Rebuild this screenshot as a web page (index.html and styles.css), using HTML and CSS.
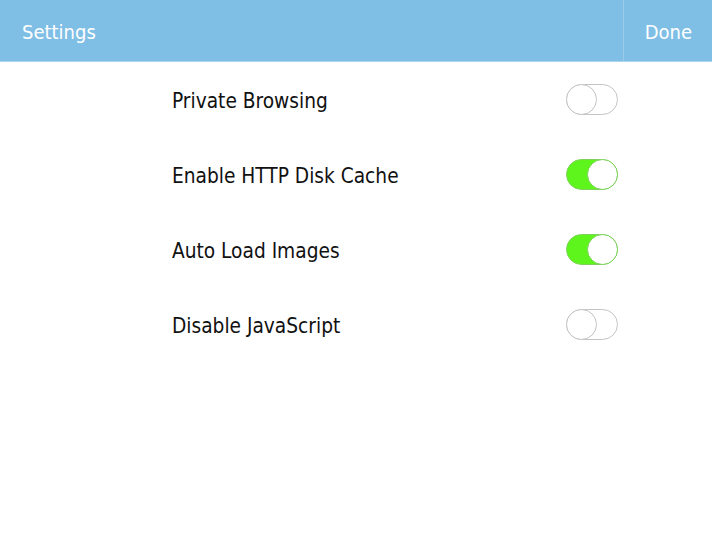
FILE: index.html
```html
<!DOCTYPE html>
<html>
<head>
<meta charset="utf-8">
<link rel="stylesheet" href="styles.css">
</head>
<body>
<header class="bar">
  <div class="title">Settings</div>
  <div class="done">Done</div>
</header>
<main class="list">
  <div class="row"><span class="label">Private Browsing</span><span class="toggle"><span class="knob"></span></span></div>
  <div class="row"><span class="label">Enable HTTP Disk Cache</span><span class="toggle on"><span class="knob"></span></span></div>
  <div class="row"><span class="label">Auto Load Images</span><span class="toggle on"><span class="knob"></span></span></div>
  <div class="row"><span class="label">Disable JavaScript</span><span class="toggle"><span class="knob"></span></span></div>
</main>
</body>
</html>
```
FILE: styles.css
```css
html, body { margin: 0; padding: 0; background: #fff; }
body { font-family: "DejaVu Sans Condensed", "DejaVu Sans", sans-serif; }
.bar {
  height: 61px;
  background: #7fbee5;
  border-bottom: 1px solid #a9d5f0;
  display: flex;
  align-items: stretch;
  color: #fff;
  font-size: 20px;
}
.title { flex: 1; display: flex; align-items: center; padding-left: 22px; padding-top: 2px; }
.done {
  width: 89px;
  border-left: 1px solid #9ccbe9;
  display: flex; align-items: center; justify-content: flex-end;
  padding-right: 20px; padding-top: 2px; box-sizing: border-box;
}
.list { padding-left: 172px; width: 446px; }
.row {
  height: 75px;
  display: flex; align-items: center; justify-content: space-between;
  font-size: 20.7px; color: #111;
}
.label { padding-top: 2px; }
.toggle {
  width: 52px; height: 31px; box-sizing: border-box;
  border: 1px solid #c4c4c4; border-radius: 16px;
  position: relative; background: #fff;
}
.knob {
  position: absolute; top: -1px; left: -1px;
  width: 31px; height: 31px; box-sizing: border-box;
  border: 1px solid #c4c4c4; border-radius: 50%; background: #fff;
}
.toggle.on { background: #5df51b; border-color: #7ed25a; }
.toggle.on .knob { left: auto; right: -1px; border-color: #7ed25a; }
```
